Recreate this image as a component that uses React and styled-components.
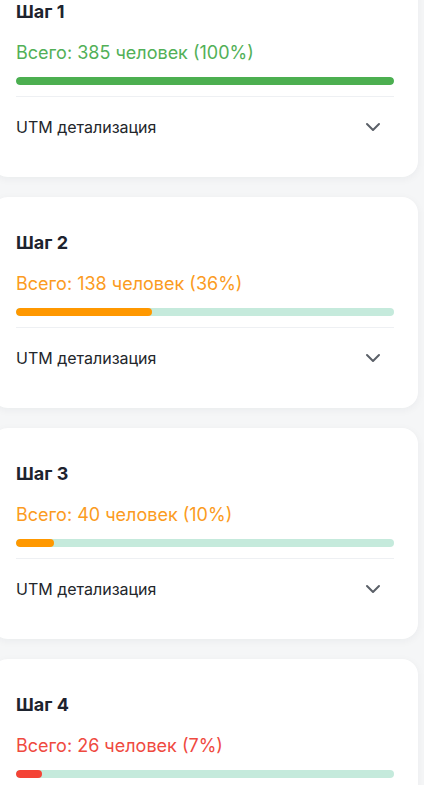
import React from 'react';
import styled, { createGlobalStyle } from 'styled-components';
import { ChevronDown } from 'lucide-react';

const GlobalStyle = createGlobalStyle`
  html, body {
    margin: 0;
    padding: 0;
    background: #f5f6f7;
    overflow: hidden;
  }
  body {
    font-family: Inter, "Noto Sans", sans-serif;
  }
`;

// Список карточек шагов воронки
const StepsList = styled.div`
  display: flex;
  flex-direction: column;
  gap: 20px;
  margin: -34px 0 0 -8px;
  width: 426px;
`;

const StepCard = styled.div`
  background: #ffffff;
  border-radius: 16px;
  box-shadow: 0 2px 8px rgba(20, 30, 50, 0.05);
  padding: 0 24px;
  display: flex;
  flex-direction: column;
`;

const StepTitle = styled.div`
  margin-top: 34px;
  font-size: 18px;
  font-weight: 700;
  line-height: 24px;
  color: #1d232e;
`;

const StepTotal = styled.div`
  margin-top: 18px;
  font-size: 18px;
  line-height: 22px;
  color: ${p => p.color};
`;

const Track = styled.div`
  margin-top: 13px;
  height: 8px;
  border-radius: 4px;
  background: #c5eadc;
  overflow: hidden;
`;

const Fill = styled.div`
  height: 100%;
  border-radius: 4px;
  background: ${p => p.color};
`;

const Divider = styled.div`
  margin-top: 11px;
  height: 1px;
  background: #eef0f3;
`;

const UtmRow = styled.div`
  height: 60px;
  margin-bottom: 20px;
  display: flex;
  align-items: center;
  justify-content: space-between;
  font-size: 16px;
  color: #23262b;
  cursor: pointer;
`;

const Chevron = styled(ChevronDown)`
  margin-right: 9px;
  color: #5b6068;
`;

const steps = [
  { n: 1, count: 385, pct: 100, color: '#4caf50', text: '#52b057' },
  { n: 2, count: 138, pct: 36, color: '#ff9800', text: '#fb9b22' },
  { n: 3, count: 40, pct: 10, color: '#ff9800', text: '#fb9b22' },
  { n: 4, count: 26, pct: 7, color: '#f44336', text: '#ef4a3f' },
];

const App = () => (
  <>
    <GlobalStyle />
    <StepsList>
      {steps.map(s => (
        <StepCard key={s.n}>
          <StepTitle>Шаг {s.n}</StepTitle>
          <StepTotal color={s.text}>Всего: {s.count} человек ({s.pct}%)</StepTotal>
          <Track>
            <Fill color={s.color} style={{ width: `${s.pct}%` }} />
          </Track>
          <Divider />
          <UtmRow>
            UTM детализация
            <Chevron size={24} strokeWidth={2} />
          </UtmRow>
        </StepCard>
      ))}
    </StepsList>
  </>
);

export default App;
